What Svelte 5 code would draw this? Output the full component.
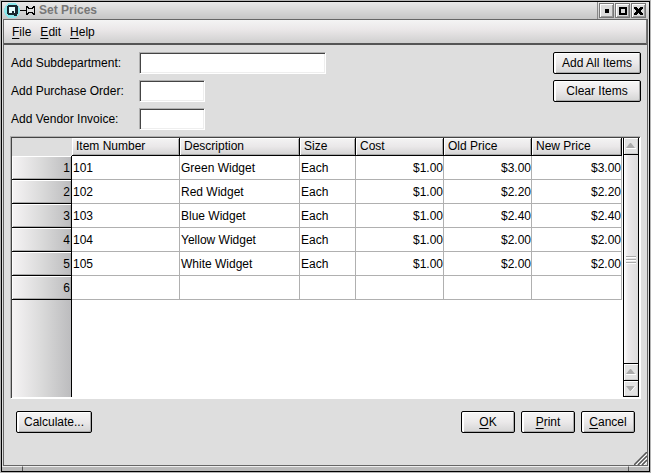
<script>
  const menus = ['File', 'Edit', 'Help'];
  const fields = [
    { id: 'subdepartment', label: 'Add Subdepartment:', wide: true },
    { id: 'order', label: 'Add Purchase Order:', wide: false },
    { id: 'invoice', label: 'Add Vendor Invoice:', wide: false }
  ];
  const columns = ['Item Number', 'Description', 'Size', 'Cost', 'Old Price', 'New Price'];
  const rows = [
    ['101', 'Green Widget', 'Each', '$1.00', '$3.00', '$3.00'],
    ['102', 'Red Widget', 'Each', '$1.00', '$2.20', '$2.20'],
    ['103', 'Blue Widget', 'Each', '$1.00', '$2.40', '$2.40'],
    ['104', 'Yellow Widget', 'Each', '$1.00', '$2.00', '$2.00'],
    ['105', 'White Widget', 'Each', '$1.00', '$2.00', '$2.00'],
    ['', '', '', '', '', '']
  ];
</script>

{#snippet arrow(down)}
  <svg width="10" height="6" viewBox="0 0 10 6" aria-hidden="true">
    {#if down}
      <path d="M0 0h9L5 5h-1z" fill="#aaa" /><path d="M9.500 0L5 5.500" stroke="#fff" />
    {:else}
      <path d="M0 5L4 0h1L9 5z" fill="#aaa" /><path d="M0 5.500h10" stroke="#fff" />
    {/if}
  </svg>
{/snippet}

<div class="desktop">
  <div class="window">
    <header class="title">
      <svg class="logo" width="34" height="17" viewBox="0 0 34 17" shape-rendering="crispEdges" aria-hidden="true">
        <circle cx="8" cy="8.500" r="8" fill="#8ce8ec" />
        <path d="M4 3h9v1h1v8h-1v2h-3v-1h-6v-1h-1v-8h1z" fill="#182830" />
        <path d="M5 5h6v6h-1v-2h-2v2h-3z" fill="#e8ffff" />
        <path d="M16 8h7v1h-7z M22 4h2v1h1v1h3v-1h1v-1h2v9h-2v-1h-1v-1h-3v1h-1v1h-2z" fill="#000" />
        <path d="M23 6h1v1h5v-1h1v5h-1v-1h-5v1h-1z" fill="#ddd" />
      </svg>
      <h1>Set Prices</h1>
      <div class="controls">
        <button aria-label="Minimize"><svg width="8" height="8" shape-rendering="crispEdges"><path d="M2 2h4v4h-4z" /></svg></button>
        <button aria-label="Maximize"><svg width="8" height="8" shape-rendering="crispEdges"><path d="M0 0h8v8h-8z M2 2v4h4v-4z" fill-rule="evenodd" /></svg></button>
        <button aria-label="Close"><svg width="9" height="8" shape-rendering="crispEdges"><path d="M0 0h3v1h1v1h1v-1h1v-1h3v2h-1v1h-1v2h1v1h1v2h-3v-1h-1v-1h-1v1h-1v1h-3v-2h1v-1h1v-2h-1v-1h-1z" /></svg></button>
      </div>
    </header>

    <div class="body">
      <nav class="menu">
        {#each menus as m}
          <button><u>{m[0]}</u>{m.slice(1)}</button>
        {/each}
      </nav>

      <main>
        <section class="top">
          <div class="fields">
            {#each fields as f}
              <label for={f.id}>{f.label}</label>
              <input id={f.id} type="text" class:wide={f.wide} />
            {/each}
          </div>
          <div class="side">
            <button class="push">Add All Items</button>
            <button class="push">Clear Items</button>
          </div>
        </section>

        <section class="frame">
          <div class="sheet">
            <table>
              <colgroup>
                <col class="n" /><col class="item" /><col class="desc" /><col class="size" />
                <col class="price" /><col class="price" /><col class="last" />
              </colgroup>
              <thead>
                <tr>
                  <td class="corner"></td>
                  {#each columns as c}<th scope="col">{c}</th>{/each}
                </tr>
              </thead>
              <tbody>
                {#each rows as row, i}
                  <tr>
                    <th scope="row">{i + 1}</th>
                    {#each row as cell, j}<td class:num={j > 2}>{cell}</td>{/each}
                  </tr>
                {/each}
              </tbody>
            </table>
            <div class="gutter"></div>
          </div>
          <div class="scroll">
            <button aria-label="Scroll up">{@render arrow(false)}</button>
            <div class="thumb"><i></i><i></i><i></i></div>
            <button aria-label="Page up">{@render arrow(false)}</button>
            <button aria-label="Scroll down">{@render arrow(true)}</button>
          </div>
        </section>

        <footer>
          <button class="push calc">Calculate...</button>
          <button class="push"><u>O</u>K</button>
          <button class="push"><u>P</u>rint</button>
          <button class="push"><u>C</u>ancel</button>
        </footer>
      </main>
      <svg class="grip" width="13" height="13" aria-hidden="true">
        <path d="M0 13L13 0M4 13L13 4M8 13L13 8" stroke="#555" stroke-width="1.500" />
        <path d="M2 13L13 2M6 13L13 6M10 13L13 10" stroke="#fff" />
      </svg>
    </div>
    <div class="resize"><span></span><span></span><span></span></div>
  </div>
</div>

<style>
  :global(body) { background: #b4b4b4; }
  .desktop, .desktop * { box-sizing: border-box; }
  .desktop { height: 100vh; padding: 1px; }
  .window {
    height: 100%;
    display: flex;
    flex-direction: column;
    border: 1px solid #000;
    background: #dedede;
    color: #000;
    font: 12px/16px "Liberation Sans", Arial, sans-serif;
  }
  button { font: inherit; color: inherit; padding: 0; margin: 0; }
  u { text-underline-offset: 2px; }

  .title {
    height: 17px;
    flex: none;
    display: flex;
    background: linear-gradient(#e8e8e8, #c6c6c6);
  }
  .logo { margin-left: 2px; }
  h1 {
    flex: 1;
    margin: 0 0 0 1px;
    font-size: 12px;
    line-height: 17px;
    color: #777;
  }
  .controls {
    display: flex;
    gap: 1px;
    padding: 1px 3px 0 1px;
    border-left: 1px solid #888;
  }
  .controls button {
    width: 15px;
    height: 15px;
    display: grid;
    place-items: center;
    border: 1px solid #777;
    box-shadow: inset 1px 1px #fff, inset -1px -1px #999;
    background: #dcdcdc;
  }

  .body {
    position: relative;
    flex: 1;
    min-height: 0;
    display: flex;
    flex-direction: column;
    border: 1px solid #666;
    margin: 0 1px;
  }
  .menu {
    flex: none;
    height: 25px;
    display: flex;
    align-items: center;
    gap: 9px;
    padding: 0 8px;
    border-bottom: 2px solid #555;
    border-right: 1px solid #777;
    background: linear-gradient(#f4f4f4, #ebe8e9 40%, #cfcfcf);
  }
  .menu button { border: 0; background: none; }

  main {
    flex: 1;
    min-height: 0;
    display: flex;
    flex-direction: column;
    padding: 7px 6px 0;
  }
  .top { display: flex; justify-content: space-between; }
  .fields {
    display: grid;
    grid-template-columns: 129px auto;
    grid-auto-rows: 22px;
    row-gap: 6px;
    align-items: center;
  }
  label { padding-left: 1px; white-space: nowrap; }
  input {
    width: 66px;
    height: 22px;
    padding: 0 2px;
    font: inherit;
    background: #fff;
    border: 1px solid;
    border-color: #b0b0b0 #fff #fff #b0b0b0;
    box-shadow: inset 1px 1px #444, inset -1px -1px #eee;
  }
  input.wide { width: 187px; }
  .side { display: grid; gap: 6px; align-content: start; }
  .push {
    width: 88px;
    height: 22px;
    border: 1px solid #000;
    border-radius: 2px;
    box-shadow: inset 2px 1px #fff, inset -1px -1px #aaa;
    background: linear-gradient(#f6f6f6, #ebe9ea 50%, #d4d4d4);
  }

  .frame {
    flex: 1;
    min-height: 0;
    display: flex;
    margin-top: 6px;
    border: 1px solid;
    border-color: #b0b0b0 #fff #fff #b0b0b0;
    box-shadow: inset 1px 1px #444;
    padding: 1px 0 1px 1px;
    background: #fff;
  }
  .sheet {
    flex: 1;
    min-width: 0;
    display: flex;
    flex-direction: column;
    overflow: hidden;
  }
  table {
    width: 610px;
    table-layout: fixed;
    border-collapse: separate;
    border-spacing: 0;
  }
  .n { width: 60px; }
  .item { width: 108px; }
  .desc { width: 120px; }
  .size { width: 56px; }
  .price { width: 88px; }
  .last { width: 90px; }
  th { font-weight: normal; }
  td, th { padding: 0 0 0 1px; text-align: left; white-space: nowrap; }
  thead td, thead th { height: 18px; line-height: 17px; }
  .corner { background: #dedede; }
  thead th {
    padding-left: 4px;
    border-right: 1px solid #000;
    border-bottom: 1px solid #000;
    box-shadow: inset 1px 1px #fff, inset -1px -1px #aaa;
    background: linear-gradient(#f4f4f4, #eae8e9 50%, #d2d2d2);
  }
  tbody td, tbody th { height: 24px; }
  tbody td {
    border-right: 1px solid #b0b0b0;
    border-bottom: 1px solid #b0b0b0;
  }
  tbody .num { text-align: right; }
  tbody th, .gutter {
    border-right: 1px solid #000;
    background: linear-gradient(90deg, #f6f4f5, #dadada 50%, #bcbcbe);
  }
  tbody th {
    text-align: right;
    padding-right: 1px;
    border-bottom: 1px solid #000;
    box-shadow: inset 1px 1px #fff, inset -1px -1px #aaa;
  }
  .gutter { flex: 1; width: 60px; }

  .scroll {
    width: 16px;
    margin-right: 1px;
    flex: none;
    display: flex;
    flex-direction: column;
    border: solid #000;
    border-width: 0 1px 1px;
  }
  .scroll button {
    height: 16px;
    display: grid;
    place-items: center;
    border: 0;
    box-shadow: inset 1px 1px #fff, inset -1px -1px #ccc;
    background: #e2e2e2;
  }
  .scroll button + button { border-top: 1px solid #000; }
  .thumb {
    flex: 1;
    display: flex;
    flex-direction: column;
    align-items: center;
    justify-content: center;
    gap: 2px;
    border: solid #000;
    border-width: 1px 0;
    background: linear-gradient(90deg, #fff, #ece9eb 30%, #dcdcdc);
  }
  .thumb i { width: 10px; height: 1px; background: #aaa; box-shadow: 0 1px #fff; }

  footer {
    flex: none;
    display: flex;
    gap: 6px;
    padding: 12px 6px 32px;
  }
  footer .push { width: 54px; }
  footer .calc { width: 76px; margin-right: auto; }
  .grip { position: absolute; right: 0; bottom: 0; }

  .resize {
    flex: none;
    height: 5px;
    display: flex;
    background: #b8b8b8;
  }
  .resize span { width: 20px; border-top: 1px solid #eee; }
  .resize span:nth-child(2) {
    flex: 1;
    border-left: 1px solid #555;
    border-right: 1px solid #555;
  }
</style>
